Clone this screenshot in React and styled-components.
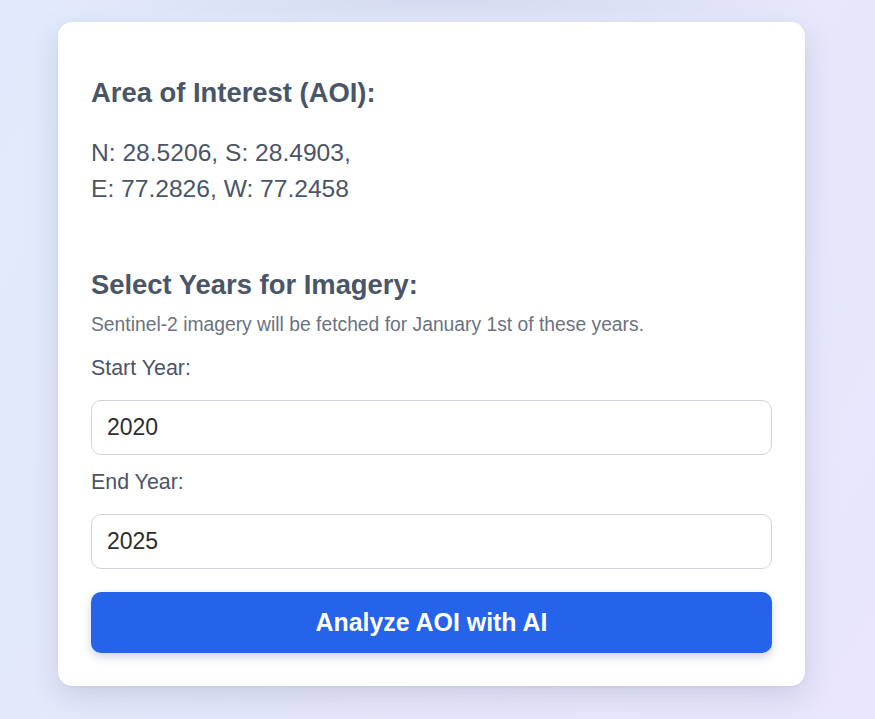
import React, { useState } from 'react';
import styled, { createGlobalStyle } from 'styled-components';

const GlobalStyle = createGlobalStyle`
  * {
    box-sizing: border-box;
  }

  html, body {
    margin: 0;
    padding: 0;
  }

  body {
    font-family: "Liberation Sans", Arial, sans-serif;
    min-height: 719px;
    background:
      radial-gradient(ellipse 380px 22px at 440px 0px, rgba(120, 120, 170, 0.14), transparent),
      linear-gradient(120deg, #e1eafc 0%, #e5e8fb 55%, #e9e6fd 100%);
  }
`;

const Page = styled.div`
  min-height: 719px;
  padding: 22px 0 40px 58px;
`;

const Card = styled.div`
  width: 747px;
  padding: 33px;
  background-color: #ffffff;
  border-radius: 14px;
  box-shadow: 0 10px 30px rgba(60, 60, 110, 0.16), 0 1px 3px rgba(0, 0, 0, 0.05);
`;

const Section = styled.section`
  display: flex;
  flex-direction: column;
`;

const Heading = styled.h3`
  margin: ${(p) => p.$top || 0}px 0 0 0;
  font-size: 27.4px;
  font-weight: 700;
  line-height: 32px;
  color: #4a5568;
`;

const Coords = styled.p`
  margin: 26px 0 0 0;
  font-size: 24.6px;
  line-height: 36px;
  color: #4a5568;
`;

const Hint = styled.p`
  margin: 11px 0 0 0;
  font-size: 19.3px;
  line-height: 26px;
  color: #6b7280;
`;

const Label = styled.label`
  display: block;
  margin: ${(p) => p.$top}px 0 0 0;
  font-size: 21.4px;
  line-height: 28px;
  color: #4a5568;
`;

const YearInput = styled.input`
  display: block;
  width: 100%;
  height: 55px;
  margin-top: 18px;
  padding: 0 15px;
  font-family: "Liberation Sans", Arial, sans-serif;
  font-size: 23px;
  color: #2d2d2d;
  background: #fff;
  border: 1px solid #d1d5db;
  border-radius: 10px;
  outline: none;
`;

const AnalyzeButton = styled.button`
  display: block;
  width: 100%;
  height: 61px;
  margin-top: 23px;
  font-family: "Liberation Sans", Arial, sans-serif;
  font-size: 24.9px;
  font-weight: 700;
  color: #ffffff;
  background-color: #2563eb;
  border: none;
  border-radius: 10px;
  box-shadow: 0 4px 10px rgba(37, 60, 140, 0.22);
  cursor: pointer;
`;

export default function App() {
  const [startYear, setStartYear] = useState('2020');
  const [endYear, setEndYear] = useState('2025');

  return (
    <>
      <GlobalStyle />
      <Page>
        <Card>
          <Section>
            <Heading $top={22}>Area of Interest (AOI):</Heading>
            <Coords>
              N: 28.5206, S: 28.4903,
              <br />
              E: 77.2826, W: 77.2458
            </Coords>
          </Section>
          <Section>
            <Heading $top={62}>Select Years for Imagery:</Heading>
            <Hint>Sentinel-2 imagery will be fetched for January 1st of these years.</Hint>
            <Label $top={16} htmlFor="start-year">Start Year:</Label>
            <YearInput
              id="start-year"
              type="number"
              value={startYear}
              onChange={(e) => setStartYear(e.target.value)}
            />
            <Label $top={13} htmlFor="end-year">End Year:</Label>
            <YearInput
              id="end-year"
              type="number"
              value={endYear}
              onChange={(e) => setEndYear(e.target.value)}
            />
          </Section>
          <AnalyzeButton>Analyze AOI with AI</AnalyzeButton>
        </Card>
      </Page>
    </>
  );
}
